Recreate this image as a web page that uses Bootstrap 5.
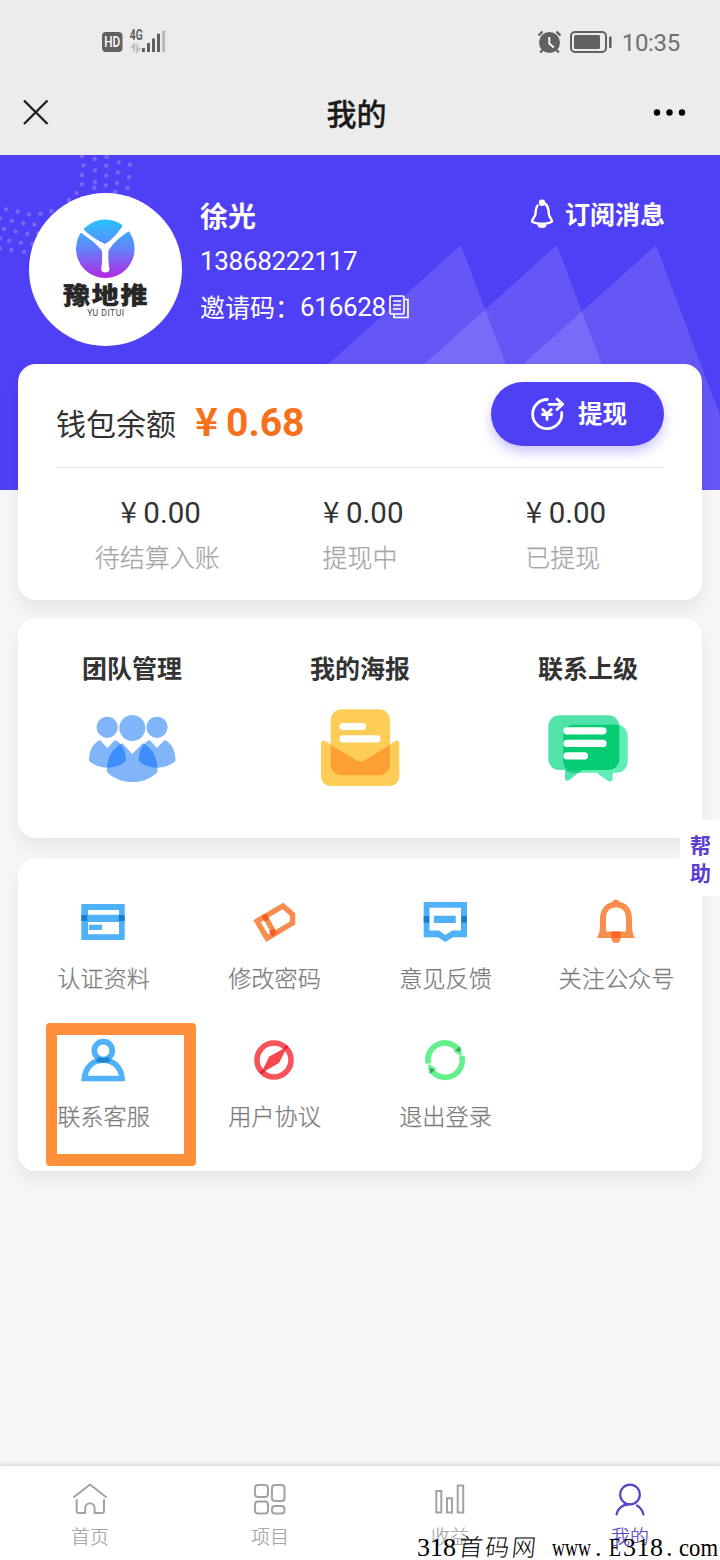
<!DOCTYPE html>
<html lang="zh-CN">
<head>
<meta charset="utf-8">
<meta name="viewport" content="width=device-width, initial-scale=1">
<title>我的</title>
<link href="https://cdn.jsdelivr.net/npm/bootstrap@5.3.0/dist/css/bootstrap.min.css" rel="stylesheet">
<style>
  :root { --brand: #5040f5; }
  body { font-family: "Noto Sans CJK SC", sans-serif; background: #f7f7f7; color: #333; min-height: 1560px; line-height: 1; overflow-x: hidden; }
  svg { display: block; flex: none; }
  .num { font-family: Roboto, "Noto Sans CJK SC", sans-serif; }
  .yen { font-family: "Noto Sans CJK SC", sans-serif; display: inline-block; width: 1em; text-align: center; }
  .top-bar { background: #ececec; height: 155px; }
  .status-row { height: 84px; padding: 0 41px 0 101px; color: #616161; }
  .status-time { font-size: 24px; margin: 2px -1px 0 9px; color: #707070; letter-spacing: -.3px; }
  .title-row { height: 57px; padding: 0 34px 0 23px; color: #1a1a1a; }
  .title-row h1 { font-size: 30px; font-weight: 500; -webkit-text-stroke: .3px; padding-bottom: 2px; }
  .title-side { flex: 1 1 0; }
  .hero { background: var(--brand); height: 335px; color: #fff; padding: 38px 55px 0 29px; }
  .hero-art { position: absolute; left: 0; top: 0; }
  .avatar { width: 153px; height: 153px; background: #fff; flex: none; }
  .user-info { padding-left: 18px; font-size: 26px; }
  .user-info > div { height: 45.5px; }
  .user-info .num { letter-spacing: -.3px; }
  .user-name { font-size: 28px; font-weight: 700; padding-bottom: 2px; }
  .invite { font-size: 25px; }
  .subscribe { font-size: 25px; font-weight: 700; height: 42px; gap: 10px; }
  .subscribe span { margin-top: -2px; }
  .panel { background: #fff; border-radius: 18px; margin: 0 18px; box-shadow: 0 10px 18px rgba(0,0,0,.07); }
  .wallet { margin-top: -126px; height: 236px; padding: 0 38px; }
  .wallet-top { height: 104px; border-bottom: 1px solid #e1e1e5; }
  .wallet-label { font-size: 30px; margin-top: 13px; }
  .wallet-sum { font-size: 39px; font-weight: 700; color: #f8701a; margin: 11px 0 0 11px; }
  .btn-cash { width: 173px; height: 64px; background: #5040f3; color: #fff; font-size: 24.5px; font-weight: 700; gap: 12px; margin-top: -4px; box-shadow: 0 6px 12px rgba(80,64,243,.3); }
  .btn-cash:hover { background: #4435dd; color: #fff; }
  .btn-cash svg { margin-left: 2px; }
  .stat-sum { font-size: 29.5px; height: 46px; padding-top: 28px; }
  .stat-label { font-size: 25px; color: #a6a6a6; margin-top: 30px; font-weight: 300; -webkit-text-stroke: .25px; }
  .team { margin-top: 18px; height: 220px; }
  .team h2 { font-size: 25px; font-weight: 700; padding-top: 34px; margin: 0 0 26px; }
  .tools { margin-top: 21px; height: 312px; padding-top: 39px; }
  .tool { height: 138px; font-size: 23.2px; color: #7c7c7c; font-weight: 300; -webkit-text-stroke: .25px; }
  .tool svg { margin: 0 1px 22px 0; }
  .tool:nth-child(n+5) svg { margin: 1px 1px 21px 0; }
  .marker { position: absolute; left: 28px; top: 164px; width: 150px; height: 143px; border: 12px solid #ff8f3a; border-left-width: 11px; border-radius: 4px; }
  .help-tab { position: absolute; right: 0; top: 820px; width: 40px; height: 76px; background: #fff; color: #5a40cf; font-size: 21px; font-weight: 700; line-height: 28px; padding: 10px 9px 10px 10px; }
  .tab-bar { height: 94px; background: #fff; box-shadow: 0 -1px 5px rgba(0,0,0,.17); padding-top: 15px; }
  .tab-bar a { color: #a3a3a3; font-size: 19px; gap: 9px; text-decoration: none; font-weight: 300; -webkit-text-stroke: .2px; }
  .tab-bar a.active { color: #5943c6; }
  .site-mark { position: absolute; right: 0; bottom: 0; overflow: visible; }
</style>
</head>
<body class="position-relative d-flex flex-column">

<header class="top-bar">
  <div class="status-row d-flex align-items-center">
    <svg width="66" height="26" viewBox="0 0 66 26" overflow="visible">
      <rect x="1" y="3" width="20.5" height="20" rx="4" fill="#616161"/>
      <text x="11.2" y="18" font-family="Roboto" font-size="14" font-weight="500" fill="#fff" text-anchor="middle" textLength="16" lengthAdjust="spacingAndGlyphs">HD</text>
      <text x="28.8" y="11.200" font-family="Roboto" font-size="14" font-weight="700" fill="#616161" textLength="13" lengthAdjust="spacingAndGlyphs">4G</text>
      <path d="M33.3 22.5v-7l-3.2 3.6M36.2 15.5v7l2.8-3.6" fill="none" stroke="#bbb" stroke-width="1.8"/>
      <g stroke="#5f5f5f" stroke-width="3"><path d="M42.4 19v4M47.5 14v9M52.5 9.500v13.500M57.500 4.800v18.200"/><path d="M62.600 1.500v21.500" stroke="#b9b9b9"/></g>
    </svg>
    <svg class="ms-auto" width="25" height="25" viewBox="0 0 25 25">
      <circle cx="12.500" cy="12.500" r="10.500" fill="#616161"/>
      <path d="M5.500 20l-2.300 2.500M19.500 20l2.300 2.500M1.500 5.500l4-4M23.500 5.500l-4-4" stroke="#616161" stroke-width="2.400"/>
      <path d="M12.300 7v6.500l4.500 4" fill="none" stroke="#fff" stroke-width="1.900"/>
    </svg>
    <svg style="margin-left:7px" width="44" height="24" viewBox="0 0 44 24">
      <rect x="2" y="2" width="35" height="20" rx="4" fill="none" stroke="#616161" stroke-width="2"/>
      <rect x="5" y="5" width="26" height="14" rx="1.500" fill="#616161"/>
      <rect x="40" y="6.500" width="2.600" height="11.500" rx="1" fill="#616161"/>
    </svg>
    <span class="status-time num">10:35</span>
  </div>
  <div class="title-row d-flex align-items-center">
    <div class="title-side"><svg width="26" height="26" viewBox="0 0 26 26"><path d="M1 .5l23.500 23.500M24.500 .5L1 24" stroke="#1f1f1f" stroke-width="2.300"/></svg></div>
    <h1 class="mb-0 ps-1">我的</h1>
    <div class="title-side d-flex justify-content-end"><svg width="33" height="8" viewBox="0 0 33 8"><circle cx="4" cy="3.500" r="3.200"/><circle cx="16.500" cy="3.500" r="3.200"/><circle cx="29" cy="3.500" r="3.200"/></svg></div>
  </div>
</header>

<section class="hero position-relative">
  <svg class="hero-art" width="720" height="335" viewBox="0 0 720 335">
    <g fill="#fff" fill-opacity=".12">
      <path d="M461 90L188 335H553z"/><path d="M557 90L284 335H649z"/><path d="M656 90L383 335H748z"/>
    </g>
    <path transform="scale(.3333)" fill="none" stroke="#7768f9" stroke-width="13" stroke-linecap="round" d="M246 3h.1M284 12h.1M320 5h.1M356 22h.1M390 29h.1M250 31h.1M285 46h.1M319 32h.1M353 52h.1M387 66h.1M246 60h.1M285 81h.1M319 62h.1M351 84h.1M383 100h.1M245 88h.1M230 114h.1M283 98h.1M317 91h.1M346 111h.1M207 135h.1M18 163h.1M53 170h.1M87 178h.1M121 176h.1M154 168h.1M0 190h.1M35 198h.1M70 205h.1M103 209h.1M12 222h.1M47 229h.1M82 237h.1M115 235h.1M0 250h.1M28 257h.1M63 263h.1M98 267h.1M0 280h.1M34 285h.1M72 291h.1"/>
  </svg>
  <div class="position-relative d-flex align-items-start">
    <div class="avatar rounded-circle">
      <svg width="153" height="153" viewBox="0 0 153 153">
        <defs><linearGradient id="globe" x1="0" y1="0" x2="0" y2="1"><stop offset="0" stop-color="#27c3fb"/><stop offset=".5" stop-color="#6384fb"/><stop offset="1" stop-color="#b127e2"/></linearGradient></defs>
        <circle cx="76.300" cy="55.700" r="29.300" fill="url(#globe)"/>
        <path d="M48 37l4.500-2.500c8 8 16 13 23.500 16.500c7-4 13-11 18-19l8 5c-9 5-18 13-22.500 20.500c-.5 6 0 13 1 19c0 4-8 4-8.300 0c1-6 1.200-13 .7-19C67 50 57 43 48 37z" fill="#fff"/>
        <text transform="translate(34 110.600) scale(1 .87)" x="0" y="0" font-family="Noto Sans CJK SC" font-size="27" font-weight="900" letter-spacing="1.800" fill="#262626" stroke="#262626" stroke-width=".5">豫地推</text>
        <text x="58.300" y="123" font-family="Roboto" font-size="8.600" letter-spacing=".500" fill="#444">YU DITUI</text>
      </svg>
    </div>
    <div class="user-info flex-grow-1">
      <div class="user-name d-flex align-items-center">徐光</div>
      <div class="num d-flex align-items-center">13868222117</div>
      <div class="d-flex align-items-center">
        <span class="invite">邀请码：</span><span class="num">616628</span>
        <svg style="margin-left:3px" width="20" height="24" viewBox="0 0 20 24" fill="none" stroke="#fff" stroke-width="1.700"><rect x="1" y="1" width="14" height="18" rx="1.500"/><path d="M4 6h8M4 10h8M4 14h8M16 4.500h3v18H5v-3"/></svg>
      </div>
    </div>
    <div class="subscribe d-flex align-items-center">
      <svg width="26" height="30" viewBox="0 0 26 30" fill="none" stroke="#fff" stroke-width="2.400" stroke-linecap="round" stroke-linejoin="round"><path d="M8.500 6.500C7 8.500 6.700 12 6.500 15C6.300 18.500 3 19.500 3 22.500C7 25.500 19 25.500 23 22.500C23 19.500 20 18.500 19.800 15C19.600 9 18 4 13 4"/><circle cx="13" cy="3.700" r="2" fill="#fff"/><path d="M10 26.500c1.500 1.300 4.500 1.300 6 0" stroke-width="3"/></svg>
      <span>订阅消息</span>
    </div>
  </div>
</section>

<section class="panel wallet position-relative">
  <div class="wallet-top d-flex align-items-center">
    <span class="wallet-label">钱包余额</span>
    <span class="wallet-sum num"><span class="yen">¥</span>0.68</span>
    <button class="btn btn-cash rounded-pill border-0 ms-auto d-flex align-items-center justify-content-center p-0" type="button">
      <svg width="36" height="34" viewBox="0 0 36 34" fill="none" stroke="#fff" stroke-width="2.800" stroke-linecap="round" stroke-linejoin="round"><path d="M31.700 15.500A14.600 14.600 0 1 1 17.300 2.500M19 7.300h13.500M27 2l5.700 5.300L27 12.500M12.800 12.500l4.200 4.500 4.200-4.500M17 17v5.500M12.500 17.500h9"/></svg>
      <span>提现</span>
    </button>
  </div>
  <div class="row g-0 text-center">
    <div class="col-4"><div class="stat-sum num"><span class="yen">¥</span>0.00</div><div class="stat-label">待结算入账</div></div>
    <div class="col-4"><div class="stat-sum num"><span class="yen">¥</span>0.00</div><div class="stat-label">提现中</div></div>
    <div class="col-4"><div class="stat-sum num"><span class="yen">¥</span>0.00</div><div class="stat-label">已提现</div></div>
  </div>
</section>

<section class="panel team">
  <div class="row g-0 text-center">
    <div class="col-4 d-flex flex-column align-items-center">
      <h2>团队管理</h2>
      <svg width="90" height="80" viewBox="0 0 90 80">
        <defs><clipPath id="midBody"><path d="M35.300 35.300L45.300 46L55.700 35.300C65.700 40 70.700 50 70.700 63.700C58 77.500 33 77.500 19.700 63.700C19.700 50 25.300 40 35.300 35.300z"/></clipPath></defs>
        <g fill="#80b5fa"><circle cx="20.300" cy="19.300" r="10.600"/><circle cx="45.300" cy="20" r="13"/><circle cx="70" cy="19.300" r="10.600"/>
        <path d="M35.300 35.300L45.300 46L55.700 35.300C65.700 40 70.700 50 70.700 63.700C58 77.500 33 77.500 19.700 63.700C19.700 50 25.300 40 35.300 35.300z"/>
        <path id="sideBody" d="M13 32L20.300 40L28 32C35 35 39 43 39 52.700C30 62 11 62 2 52.700C2 43 6 35 13 32z"/><use href="#sideBody" x="49.600"/></g>
        <g clip-path="url(#midBody)" fill="#3e8dfb"><path d="M13 32L20.300 40L28 32C35 35 39 43 39 52.700C30 62 11 62 2 52.700C2 43 6 35 13 32z"/><path transform="translate(49.600)" d="M13 32L20.300 40L28 32C35 35 39 43 39 52.700C30 62 11 62 2 52.700C2 43 6 35 13 32z"/></g>
      </svg>
    </div>
    <div class="col-4 d-flex flex-column align-items-center">
      <h2>我的海报</h2>
      <svg width="90" height="80" viewBox="0 0 90 80">
        <defs><clipPath id="sheet"><rect x="15.700" y="1.300" width="59.300" height="66" rx="11"/></clipPath></defs>
        <rect x="15.700" y="1.300" width="59.300" height="66" rx="11" fill="#fdcd58"/>
        <path d="M6 36Q6 31 11 33.500L42 52.500Q45.700 54.500 49.500 52.500L79.500 33.500Q84.300 31 84.300 36V67Q84.300 78 73 78H17Q6 78 6 67z" fill="#fdcd58"/>
        <path clip-path="url(#sheet)" d="M6 31L42 52.500Q45.700 54.500 49.500 52.500L84.300 31V78H6z" fill="#fd9f32"/>
        <path d="M28 18.500h19.500M28 30.800h34" stroke="#fff" stroke-width="7.200" stroke-linecap="round"/>
      </svg>
    </div>
    <div class="col-4 d-flex flex-column align-items-center">
      <h2>联系上级</h2>
      <svg width="90" height="80" viewBox="0 0 90 80">
        <defs><clipPath id="bubble"><rect x="5.300" y="7.300" width="71" height="54.700" rx="11"/></clipPath></defs>
        <path d="M31.300 16.700h42.400a11 11 0 0 1 11 11v26a11 11 0 0 1-11 11h-4v6q-.7 4.500-5 2L53.700 64.700H31.300a11 11 0 0 1-11-11v-26a11 11 0 0 1 11-11z" fill="#5feeb8"/>
        <path d="M16.300 7.300h49a11 11 0 0 1 11 11V51a11 11 0 0 1-11 11H39L26 72.300q-3.700 1.500-4-2V62h-5.700a11 11 0 0 1-11-11V18.300a11 11 0 0 1 11-11z" fill="#50e3aa"/>
        <rect clip-path="url(#bubble)" x="20.300" y="16.700" width="64.400" height="48" rx="11" fill="#06cc73"/>
        <path d="M22 62h17.500l-3.500 2.700h-8q-3-.5-6-2.700z" fill="#17cf7e"/>
        <path d="M24 22.800h36M24 35.400h36M24 47.800h17.500" stroke="#fff" stroke-width="7.200" stroke-linecap="round"/>
      </svg>
    </div>
  </div>
</section>

<section class="panel tools position-relative">
  <div class="marker"></div>
  <div class="row g-0 position-relative">
    <div class="col-3 tool d-flex flex-column align-items-center">
      <svg width="46" height="46" viewBox="0 0 46 46"><path fill="#4fb1f7" fill-rule="evenodd" d="M1.300 6h43.400v36H1.300zM8 12v4.700h31V12zM8 24v12.300h31V24z"/><path fill="#1b7bd0" d="M1.300 17h5.900v6H1.300zM38.800 17h5.900v6h-5.900z"/><path fill="#4fb1f7" d="M9 26.700h13V32H9z"/></svg>
      <span>认证资料</span>
    </div>
    <div class="col-3 tool d-flex flex-column align-items-center">
      <svg width="46" height="46" viewBox="0 0 46 46" fill="none" stroke="#f88c4c" stroke-width="5.400"><path d="M6 23.200L16 40.200L41.600 25V16.500L32 8z"/><path d="M13 16.500l11 20"/><path stroke="#f5591d" d="M13 17l2.800 5M20.500 32l3 5"/></svg>
      <span>修改密码</span>
    </div>
    <div class="col-3 tool d-flex flex-column align-items-center">
      <svg width="46" height="46" viewBox="0 0 46 46"><path fill="#4fb1f7" fill-rule="evenodd" d="M1.700 4H45v35.300H31L23.300 44 16 39.300H1.700zM7.500 9.700V32.500h9.300L23.300 37l7-4.500H39V9.700z"/><path fill="#1b7bd0" d="M1.700 18h5.600v6.500H1.700zM39.300 18H45v6.500h-5.700z"/><path fill="#4fb1f7" d="M12 17.700h21.700V25H12z"/></svg>
      <span>意见反馈</span>
    </div>
    <div class="col-3 tool d-flex flex-column align-items-center">
      <svg width="46" height="46" viewBox="0 0 46 46"><path fill="#f88f4e" d="M18.500 36h9v5.500q-1 3.500-4.500 3.500t-4.500-3.500z"/><path fill="#f88f4e" fill-rule="evenodd" d="M3.700 40C7 36 7 30 7 21C7 10 14 5 19.500 3.800Q20 1.500 23 1.500Q26 1.500 26.500 3.800C33 5 39 10 39 21C39 30 39 36 42.300 40zM13 33.500H33V21C33 13 29 9.500 23 9.500C17 9.500 13 13 13 21z"/><path fill="#f96425" d="M18.500 33.500h9v6.500h-9z"/></svg>
      <span>关注公众号</span>
    </div>
    <div class="col-3 tool d-flex flex-column align-items-center">
      <svg width="46" height="46" viewBox="0 0 46 46" fill="none" stroke="#4fb1f7" stroke-width="5.700"><circle cx="23.300" cy="13.700" r="9"/><path d="M4.400 41.500C5.500 30 13 23.200 23.200 23.200C33.500 23.200 41 30 42 41.500z"/><path stroke="#1b85d6" stroke-width="5" d="M17 22q6.300 3 12.600 0"/></svg>
      <span>联系客服</span>
    </div>
    <div class="col-3 tool d-flex flex-column align-items-center">
      <svg width="46" height="46" viewBox="0 0 46 46"><circle cx="23" cy="23" r="17" fill="none" stroke="#f7545a" stroke-width="5.600"/><path fill="#f7474d" d="M36.500 9.500L28 26L9.800 36.500L18.300 19.500z"/><path d="M33 12l3.500-3M9.800 36.500l3.500-3" stroke="#e0242d" stroke-width="2.500"/></svg>
      <span>用户协议</span>
    </div>
    <div class="col-3 tool d-flex flex-column align-items-center">
      <svg width="46" height="46" viewBox="0 0 46 46"><path fill="none" stroke="#64f08c" stroke-width="5.600" d="M35.500 11.500A17 17 0 0 0 6.300 26.500M10 34A17 17 0 0 0 39.700 19"/><path fill="#64f08c" d="M31 14l8.500-4v9.500zM6 27l8.500 4.500L7 37z"/><path fill="#3aa45e" d="M33.500 13.500l4-4.500 1 6zM7.500 31l5.500 1.700L8.700 36.500z"/></svg>
      <span>退出登录</span>
    </div>
  </div>
</section>

<div class="help-tab">帮<br>助</div>

<nav class="tab-bar d-flex mt-auto">
  <a class="col-3 d-flex flex-column align-items-center" href="#"><svg width="36" height="36" viewBox="0 0 36 36" fill="none" stroke="currentColor" stroke-width="2" stroke-linecap="round" stroke-linejoin="round"><path d="M2 16L18 3.500L34 16M4.700 19v11q0 2 2 2h6.500V27a4.700 4.700 0 0 1 9.400 0v5h7q2.400 0 2.400-2V19"/></svg>首页</a>
  <a class="col-3 d-flex flex-column align-items-center" href="#"><svg width="36" height="36" viewBox="0 0 36 36" fill="none" stroke="currentColor" stroke-width="2"><rect x="3" y="4" width="13" height="12" rx="3"/><rect x="20" y="4" width="12.500" height="16" rx="3"/><rect x="3" y="20.500" width="13" height="12" rx="3"/><rect x="20" y="25" width="12.500" height="7.500" rx="3"/></svg>项目</a>
  <a class="col-3 d-flex flex-column align-items-center" href="#"><svg width="36" height="36" viewBox="0 0 36 36" fill="none" stroke="currentColor" stroke-width="2"><path d="M4.300 10h5v21.500h-5zM15 17.300h5v14.200h-5zM25.700 4.500h5.500v27h-5.500z"/></svg>收益</a>
  <a class="col-3 d-flex flex-column align-items-center active" href="#"><svg width="36" height="36" viewBox="0 0 36 36" fill="none" stroke="currentColor" stroke-width="2.200" stroke-linecap="round"><circle cx="18" cy="13.500" r="9.800"/><path d="M4.500 33.500C6 27 11 23.500 17 23.300M25 24.500c3.500 2 5.500 5 6.500 9"/></svg>我的</a>
</nav>

<svg class="site-mark" width="306" height="32" viewBox="0 0 306 32" fill="#000">
  <g font-family="Liberation Serif" font-size="26">
    <text x="3" y="28" textLength="39" lengthAdjust="spacing">318</text>
    <text x="138" y="28" textLength="39" lengthAdjust="spacingAndGlyphs">www</text>
    <text x="181" y="28">.</text>
    <text x="195" y="28" textLength="12" lengthAdjust="spacingAndGlyphs">E</text>
    <text x="209" y="28" textLength="40" lengthAdjust="spacing">318</text>
    <text x="252" y="28">.</text>
    <text x="265" y="28" textLength="39" lengthAdjust="spacingAndGlyphs">com</text>
  </g>
  <text transform="skewX(-6)" x="47" y="28.500" font-family="Noto Sans CJK SC" font-weight="300" font-size="24" letter-spacing="2.500">首码网</text>
</svg>

<script src="https://cdn.jsdelivr.net/npm/bootstrap@5.3.0/dist/js/bootstrap.bundle.min.js"></script>
</body>
</html>
